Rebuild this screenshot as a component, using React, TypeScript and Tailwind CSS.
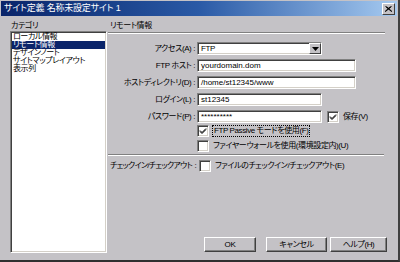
import React from 'react'

const sunken =
  'border border-t-[#808080] border-l-[#808080] border-b-white border-r-white shadow-[inset_1px_1px_0_#404040,inset_-1px_-1px_0_#d4d0c8] bg-white'

function CheckBox({ checked }: { checked?: boolean }) {
  return (
    <div className={`${sunken} flex h-[12px] w-[12px] shrink-0 items-center justify-center`}>
      {checked && (
        <svg width="8" height="8" viewBox="0 0 8 8">
          <path d="M1 3.5 L3 5.5 L7 1.5 M1 4.5 L3 6.5 L7 2.5" stroke="#000" strokeWidth="1" fill="none" />
        </svg>
      )}
    </div>
  )
}

function Field({ value, width }: { value: string; width: string }) {
  return (
    <div className={`${sunken} ${width} flex h-[13px] shrink-0 items-center pl-[3px] leading-none tracking-normal`}>{value}</div>
  )
}

function Btn({ label, width }: { label: string; width: string }) {
  return (
    <div
      className={`${width} flex h-[15px] shrink-0 items-center justify-center border border-t-white border-l-white border-b-[#404040] border-r-[#404040] bg-[#c4c2c6] leading-none shadow-[inset_-1px_-1px_0_#808080]`}
    >
      {label}
    </div>
  )
}

export default function App() {
  const labels = ['アクセス(A) :', 'FTP ホスト :', 'ホストディレクトリ(D) :', 'ログイン(L) :', 'パスワード(P) :']
  return (
    <div
      className="flex h-[262px] w-[400px] flex-col overflow-hidden whitespace-nowrap border-r-2 border-b-2 border-r-[#404040] border-b-[#303030] bg-[#c4c2c6] text-[8px] tracking-[-0.4px] text-black [font-feature-settings:'palt']"
      style={{ fontFamily: '"Liberation Sans", "Noto Sans CJK JP", sans-serif' }}
    >
      {/* title bar */}
      <div className="mx-[1px] mt-[1px] flex h-[15px] shrink-0 items-center justify-between bg-gradient-to-r from-[#0a246a] via-[#2a5aa6] to-[#a6caf0] pl-[3px] pr-[2px]">
        <span className="text-[9px] leading-none tracking-[-0.2px] text-white">サイト定義 名称未設定サイト 1</span>
        <div className="flex h-[12px] w-[13px] items-center justify-center border border-t-white border-l-white border-b-[#404040] border-r-[#404040] bg-[#c4c2c6]">
          <svg width="7" height="6" viewBox="0 0 7 6">
            <path d="M0.5 0.5 L6.5 5.5 M6.5 0.5 L0.5 5.5 M1.5 0.5 L7 5.5 M5.5 0.5 L0 5.5" stroke="#000" strokeWidth="1" fill="none" />
          </svg>
        </div>
      </div>

      <div className="flex min-h-0 flex-1 pl-[10px] pr-[10px]">
        {/* category column */}
        <div className="flex w-[97px] shrink-0 flex-col pb-[7px]">
          <div className="flex h-[14px] items-end pl-[1px] leading-none">カテゴリ</div>
          <div className={`${sunken} mt-[1px] flex flex-1 flex-col overflow-hidden pt-[1px] pl-[1px] pr-[1px] leading-[8px]`}>
            <div className="h-[8px] pl-[1px]">ローカル情報</div>
            <div className="h-[8px] bg-[#0a246a] pl-[1px] text-white">リモート情報</div>
            <div className="h-[8px] pl-[1px]">デザインノート</div>
            <div className="h-[8px] pl-[1px]">サイトマップレイアウト</div>
            <div className="h-[8px] pl-[1px]">表示列</div>
          </div>
        </div>

        {/* right panel */}
        <div className="ml-[1px] flex min-w-0 flex-1 flex-col">
          <div className="flex h-[14px] items-end pl-[2px] leading-none">リモート情報</div>
          <div className="mt-[2px] mr-[3px] border-t border-b border-t-[#808080] border-b-white" />

          <div className="mt-[8px] grid grid-cols-[89px_1fr] gap-y-[4px]">
            {labels.map((l, i) => (
              <React.Fragment key={l}>
                <div className="flex h-[13px] items-center justify-end pr-[2px] leading-none">{l}</div>
                <div className="flex items-center">
                  {i === 0 && (
                    <div className={`${sunken} flex h-[13px] w-[125px] items-center justify-between pl-[3px] leading-none`}>
                      FTP
                      <div className="flex h-[11px] w-[12px] items-center justify-center border border-t-white border-l-white border-b-[#404040] border-r-[#404040] bg-[#c4c2c6]">
                        <svg width="7" height="4" viewBox="0 0 7 4">
                          <path d="M0 0 H7 L3.5 4 Z" fill="#000" />
                        </svg>
                      </div>
                    </div>
                  )}
                  {i === 1 && <Field value="yourdomain.dom" width="w-[159px]" />}
                  {i === 2 && <Field value="/home/st12345/www" width="w-[159px]" />}
                  {i === 3 && <Field value="st12345" width="w-[125px]" />}
                  {i === 4 && (
                    <>
                      <Field value="**********" width="w-[125px]" />
                      <div className="ml-[5px] flex items-center gap-[4px] leading-none">
                        <CheckBox checked />
                        保存(V)
                      </div>
                    </>
                  )}
                </div>
              </React.Fragment>
            ))}
          </div>

          <div className="mt-[2px] ml-[89px] flex flex-col gap-[3px] leading-none">
            <div className="flex items-center gap-[3px]">
              <CheckBox checked />
              <span className="border border-dotted border-black px-[1px] py-[1px]">FTP Passive モードを使用(F)</span>
            </div>
            <div className="flex items-center gap-[4px]">
              <CheckBox />
              ファイヤーウォールを使用(環境設定内)(U)
            </div>
          </div>

          <div className="mt-[2px] mr-[4px] border-t border-b border-t-[#808080] border-b-white" />

          <div className="mt-[4px] flex items-center leading-none">
            <div className="flex w-[91px] shrink-0 justify-between pl-[2px] pr-[3px] tracking-[-0.7px]">
              <span>チェックイン/チェックアウト</span>
              <span>:</span>
            </div>
            <div className="flex items-center gap-[4px]">
              <CheckBox />
              ファイルのチェックイン/チェックアウト(E)
            </div>
          </div>

          <div className="mt-auto mb-[8px] flex justify-end pr-[1px]">
            <Btn label="OK" width="w-[52px]" />
            <div className="w-[10px] shrink-0" />
            <Btn label="キャンセル" width="w-[61px]" />
            <div className="w-[3px] shrink-0" />
            <Btn label="ヘルプ(H)" width="w-[57px]" />
          </div>
        </div>
      </div>
    </div>
  )
}
